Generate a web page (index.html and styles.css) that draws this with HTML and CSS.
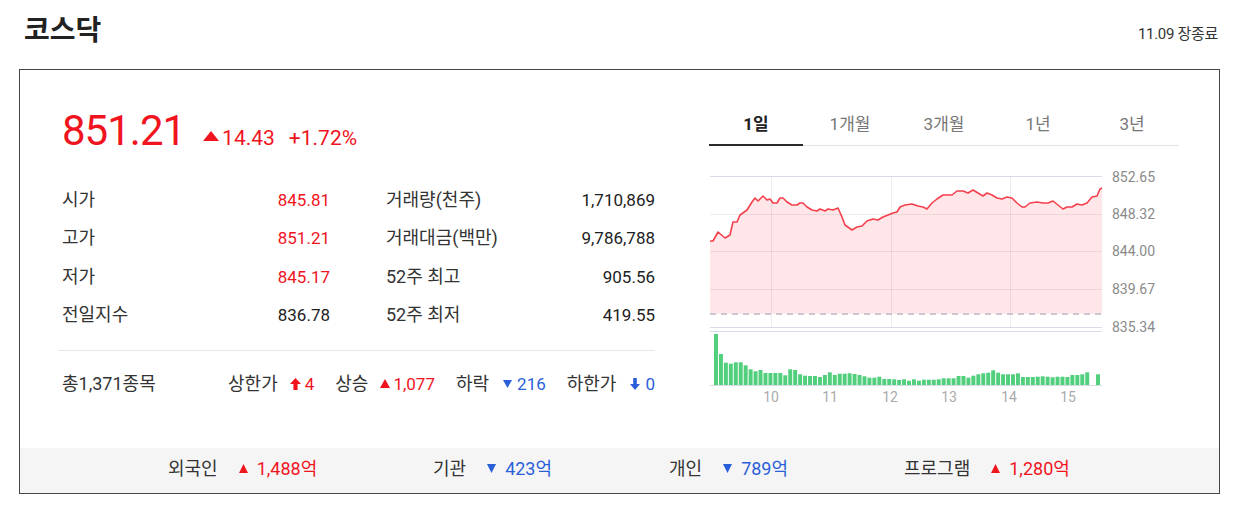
FILE: index.html
```html
<!DOCTYPE html>
<html lang="ko">
<head>
<meta charset="utf-8">
<title>코스닥</title>
<link rel="stylesheet" href="styles.css">
</head>
<body>
<div class="header">
  <h1 class="title">코스닥</h1>
  <div class="date">11.09 장종료</div>
</div>
<div class="box">
  <div class="main">
    <div class="left">
      <div class="price-row">
        <span class="price">851.21</span>
        <span class="chg"><svg class="tri-lg" width="16" height="10" viewBox="0 0 16 10"><path d="M8 0 L16 10 H0 Z" fill="#f0141e"/></svg>14.43</span>
        <span class="rate">+1.72%</span>
      </div>
      <div class="stats">
        <div class="col">
          <div class="row"><span class="lbl">시가</span><span class="up">845.81</span></div>
          <div class="row"><span class="lbl">고가</span><span class="up">851.21</span></div>
          <div class="row"><span class="lbl">저가</span><span class="up">845.17</span></div>
          <div class="row"><span class="lbl">전일지수</span><span class="val">836.78</span></div>
        </div>
        <div class="col">
          <div class="row"><span class="lbl">거래량(천주)</span><span class="val">1,710,869</span></div>
          <div class="row"><span class="lbl">거래대금(백만)</span><span class="val">9,786,788</span></div>
          <div class="row"><span class="lbl">52주 최고</span><span class="val">905.56</span></div>
          <div class="row"><span class="lbl">52주 최저</span><span class="val">419.55</span></div>
        </div>
      </div>
      <div class="divider"></div>
      <div class="summary">
        <span class="lbl">총1,371종목</span>
        <div class="counts">
          <span class="cnt"><span class="lbl">상한가</span><svg class="ic ic-arrow" width="11" height="12" viewBox="0 0 11 12"><path d="M5.5 0 L11 6 H7.6 V12 H3.4 V6 H0 Z" fill="#f0141e"/></svg><span class="up">4</span></span>
          <span class="cnt"><span class="lbl">상승</span><svg class="ic ic-tri" width="10" height="9" viewBox="0 0 10 9"><path d="M5 0 L10 9 H0 Z" fill="#f0141e"/></svg><span class="up">1,077</span></span>
          <span class="cnt"><span class="lbl">하락</span><svg class="ic ic-tri-d" width="9" height="8" viewBox="0 0 9 8"><path d="M0 0 H9 L4.5 8 Z" fill="#2b5fd9"/></svg><span class="down">216</span></span>
          <span class="cnt"><span class="lbl">하한가</span><svg class="ic ic-arrow-d" width="10" height="12" viewBox="0 0 10 12"><path d="M3.2 0 H6.8 V6 H10 L5 12 L0 6 H3.2 Z" fill="#2b5fd9"/></svg><span class="down">0</span></span>
        </div>
      </div>
    </div>
    <div class="right">
      <div class="tabs">
        <div class="tab active">1일</div>
        <div class="tab">1개월</div>
        <div class="tab">3개월</div>
        <div class="tab">1년</div>
        <div class="tab">3년</div>
      </div>
      <svg class="chart" width="472" height="264" viewBox="0 0 472 264">
        <g transform="translate(-709 -146)">
          <polygon fill="#ffe6e9" points="710,241 713,241 718,232 725,238 730,235 733,222 737,222 740,215 747,210 752,202 755,198 758,201 763,196 767,200 770,199 773,203 777,203 780,198 783,198 787,202 792,205 797,205 800,203 803,203 807,207 812,210 817,211 820,209 825,211 828,209 833,210 838,208 842,217 845,225 852,230 857,227 862,226 867,221 873,219 878,220 883,217 888,215 893,213 897,212 900,207 905,205 912,204 918,206 923,207 927,209 932,203 937,199 943,195 952,195 957,191 963,191 968,193 973,190 978,193 983,196 987,193 992,195 997,198 1002,199 1007,197 1012,198 1017,203 1022,207 1025,207 1030,203 1037,202 1043,203 1048,203 1053,201 1058,205 1063,209 1067,207 1072,207 1077,204 1082,205 1087,203 1092,197 1097,196 1100,189 1102,188 1102,314 710,314"/>
          <g stroke="rgba(0,0,0,0.07)" stroke-width="1">
            <line x1="710" y1="214.5" x2="1102" y2="214.5"/>
            <line x1="710" y1="251.5" x2="1102" y2="251.5"/>
            <line x1="710" y1="289.5" x2="1102" y2="289.5"/>
            <line x1="771.5" y1="176" x2="771.5" y2="327"/>
            <line x1="891.5" y1="176" x2="891.5" y2="327"/>
            <line x1="1010.5" y1="176" x2="1010.5" y2="327"/>
          </g>
          <g stroke="#d6dbe7" stroke-width="1">
            <line x1="710" y1="176.5" x2="1102" y2="176.5"/>
            <line x1="710" y1="327.5" x2="1102" y2="327.5"/>
            <line x1="710" y1="331.5" x2="1102" y2="331.5"/>
            <line x1="710" y1="385.5" x2="1102" y2="385.5"/>
          </g>
          <line x1="710" y1="314" x2="1102" y2="314" stroke="#cbc6d2" stroke-width="2" stroke-dasharray="6 5"/>
          <polyline fill="none" stroke="#f4404c" stroke-width="1.6" stroke-linejoin="round" points="710,241 713,241 718,232 725,238 730,235 733,222 737,222 740,215 747,210 752,202 755,198 758,201 763,196 767,200 770,199 773,203 777,203 780,198 783,198 787,202 792,205 797,205 800,203 803,203 807,207 812,210 817,211 820,209 825,211 828,209 833,210 838,208 842,217 845,225 852,230 857,227 862,226 867,221 873,219 878,220 883,217 888,215 893,213 897,212 900,207 905,205 912,204 918,206 923,207 927,209 932,203 937,199 943,195 952,195 957,191 963,191 968,193 973,190 978,193 983,196 987,193 992,195 997,198 1002,199 1007,197 1012,198 1017,203 1022,207 1025,207 1030,203 1037,202 1043,203 1048,203 1053,201 1058,205 1063,209 1067,207 1072,207 1077,204 1082,205 1087,203 1092,197 1097,196 1100,189 1102,188"/>
          <g fill="#8a8a8a" font-size="14" class="axis">
            <text x="1112" y="182">852.65</text>
            <text x="1112" y="219">848.32</text>
            <text x="1112" y="256">844.00</text>
            <text x="1112" y="294">839.67</text>
            <text x="1112" y="332">835.34</text>
          </g>
          <g fill="#aaaaaa" font-size="14" text-anchor="middle" class="axis">
            <text x="771" y="402">10</text>
            <text x="830" y="402">11</text>
            <text x="890" y="402">12</text>
            <text x="949" y="402">13</text>
            <text x="1009" y="402">14</text>
            <text x="1068" y="402">15</text>
          </g>
          <g fill="#52cf7c">
            <g transform="translate(714 0) scale(0.99 1)">
              <rect x="0" y="334" width="4" height="51"/>
              <rect x="5" y="354" width="4" height="31"/>
              <rect x="10" y="362.7" width="4" height="22.3"/>
              <rect x="15" y="363.7" width="4" height="21.3"/>
              <rect x="20" y="362.3" width="4" height="22.7"/>
              <rect x="25" y="362.3" width="4" height="22.7"/>
              <rect x="30" y="365.3" width="4" height="19.7"/>
              <rect x="35" y="369.3" width="4" height="15.7"/>
              <rect x="40" y="371.3" width="4" height="13.7"/>
              <rect x="45" y="370" width="4" height="15"/>
              <rect x="50" y="373" width="4" height="12"/>
              <rect x="55" y="373" width="4" height="12"/>
              <rect x="60" y="373" width="4" height="12"/>
              <rect x="65" y="373" width="4" height="12"/>
              <rect x="70" y="375.3" width="4" height="9.7"/>
              <rect x="75" y="369.3" width="4" height="15.7"/>
              <rect x="80" y="370" width="4" height="15"/>
              <rect x="85" y="374.3" width="4" height="10.7"/>
              <rect x="90" y="375.7" width="4" height="9.3"/>
              <rect x="95" y="376" width="4" height="9"/>
              <rect x="100" y="376" width="4" height="9"/>
              <rect x="105" y="377" width="4" height="8"/>
              <rect x="110" y="375" width="4" height="10"/>
              <rect x="115" y="372.3" width="4" height="12.7"/>
              <rect x="120" y="375" width="4" height="10"/>
              <rect x="125" y="373.7" width="4" height="11.3"/>
              <rect x="130" y="373.7" width="4" height="11.3"/>
              <rect x="135" y="373.3" width="4" height="11.7"/>
              <rect x="140" y="374" width="4" height="11"/>
              <rect x="145" y="375" width="4" height="10"/>
              <rect x="150" y="376.3" width="4" height="8.7"/>
              <rect x="155" y="377.7" width="4" height="7.3"/>
              <rect x="160" y="377.7" width="4" height="7.3"/>
              <rect x="165" y="376.7" width="4" height="8.3"/>
              <rect x="170" y="379" width="4" height="6"/>
              <rect x="175" y="379" width="4" height="6"/>
              <rect x="180" y="379.3" width="4" height="5.7"/>
              <rect x="185" y="380" width="4" height="5"/>
              <rect x="190" y="379.3" width="4" height="5.7"/>
              <rect x="195" y="380.7" width="4" height="4.3"/>
              <rect x="200" y="379.3" width="4" height="5.7"/>
              <rect x="205" y="380.7" width="4" height="4.3"/>
              <rect x="210" y="379.7" width="4" height="5.3"/>
              <rect x="215" y="379.7" width="4" height="5.3"/>
              <rect x="220" y="379.7" width="4" height="5.3"/>
              <rect x="225" y="379.3" width="4" height="5.7"/>
              <rect x="230" y="378.3" width="4" height="6.7"/>
              <rect x="235" y="378.3" width="4" height="6.7"/>
              <rect x="240" y="378.3" width="4" height="6.7"/>
              <rect x="245" y="376" width="4" height="9"/>
              <rect x="250" y="376" width="4" height="9"/>
              <rect x="255" y="377.7" width="4" height="7.3"/>
              <rect x="260" y="375.7" width="4" height="9.3"/>
              <rect x="265" y="374.3" width="4" height="10.7"/>
              <rect x="270" y="373.3" width="4" height="11.7"/>
              <rect x="275" y="372.7" width="4" height="12.3"/>
              <rect x="280" y="370.3" width="4" height="14.7"/>
              <rect x="285" y="372.7" width="4" height="12.3"/>
              <rect x="290" y="374.3" width="4" height="10.7"/>
              <rect x="295" y="374.3" width="4" height="10.7"/>
              <rect x="300" y="374.3" width="4" height="10.7"/>
              <rect x="305" y="373.3" width="4" height="11.7"/>
              <rect x="310" y="377" width="4" height="8"/>
              <rect x="315" y="377" width="4" height="8"/>
              <rect x="320" y="377" width="4" height="8"/>
              <rect x="325" y="376.7" width="4" height="8.3"/>
              <rect x="330" y="376.3" width="4" height="8.7"/>
              <rect x="335" y="376.7" width="4" height="8.3"/>
              <rect x="340" y="377.3" width="4" height="7.7"/>
              <rect x="345" y="376.7" width="4" height="8.3"/>
              <rect x="350" y="376.7" width="4" height="8.3"/>
              <rect x="355" y="377" width="4" height="8"/>
              <rect x="360" y="375" width="4" height="10"/>
              <rect x="365" y="375" width="4" height="10"/>
              <rect x="370" y="374.3" width="4" height="10.7"/>
              <rect x="375" y="372.3" width="4" height="12.7"/>
            </g>
            <rect x="1096" y="374.3" width="4" height="10.7"/>
          </g>
        </g>
      </svg>
    </div>
  </div>
  <div class="footer">
    <div class="fitem"><span class="lbl">외국인</span><svg class="fic" width="9" height="9" viewBox="0 0 9 9"><path d="M4.5 0 L9 9 H0 Z" fill="#f0141e"/></svg><span class="up">1,488억</span></div>
    <div class="fitem"><span class="lbl">기관</span><svg class="fic" width="9" height="9" viewBox="0 0 9 9"><path d="M0 0 H9 L4.5 9 Z" fill="#2b5fd9"/></svg><span class="down">423억</span></div>
    <div class="fitem"><span class="lbl">개인</span><svg class="fic" width="9" height="9" viewBox="0 0 9 9"><path d="M0 0 H9 L4.5 9 Z" fill="#2b5fd9"/></svg><span class="down">789억</span></div>
    <div class="fitem"><span class="lbl">프로그램</span><svg class="fic" width="9" height="9" viewBox="0 0 9 9"><path d="M4.5 0 L9 9 H0 Z" fill="#f0141e"/></svg><span class="up">1,280억</span></div>
  </div>
</div>
</body>
</html>
```

FILE: styles.css
```css
* {
  box-sizing: border-box;
  margin: 0;
  padding: 0;
}

body {
  margin: 0;
  width: 1243px;
  background: #ffffff;
  font-family: Roboto, "Noto Sans CJK KR", sans-serif;
  color: #333333;
}

.header {
  display: flex;
  justify-content: space-between;
  align-items: flex-start;
  height: 69px;
  padding: 0 25px 0 24px;
}

.title {
  font-size: 28px;
  font-weight: 700;
  line-height: 40px;
  padding-top: 11px;
  color: #222222;
}

.date {
  font-size: 15px;
  line-height: 20px;
  padding-top: 24px;
  color: #333333;
  letter-spacing: -0.3px;
}

.box {
  margin-left: 19px;
  width: 1201px;
  height: 425px;
  border: 1px solid #464646;
  display: flex;
  flex-direction: column;
}

.main {
  flex: 1;
  display: flex;
  gap: 54px;
  padding: 37px 38px 0 42px;
}

.left {
  width: 593px;
}

.up {
  color: #f0141e;
}

.down {
  color: #2b5fd9;
}

.lbl {
  color: #333333;
}

.val {
  color: #222222;
}

.price-row {
  display: flex;
  align-items: baseline;
  line-height: 48px;
  color: #f0141e;
}

.price {
  font-size: 42px;
  letter-spacing: -1px;
}

.chg {
  font-size: 21px;
  margin-left: 18px;
}

.tri-lg {
  vertical-align: 4px;
  margin-right: 3px;
}

.rate {
  font-size: 21px;
  margin-left: 14px;
}

.stats {
  display: grid;
  grid-template-columns: 268px 269px;
  column-gap: 56px;
  margin-top: 19px;
}

.col {
  display: flex;
  flex-direction: column;
}

.row {
  display: flex;
  justify-content: space-between;
  height: 38.4px;
  line-height: 38.4px;
  font-size: 17px;
}

.row .lbl,
.summary .lbl {
  font-size: 18px;
}

.divider {
  margin-top: 15px;
  margin-left: -4px;
  height: 1px;
  background: #e6e6e6;
}

.summary {
  display: flex;
  justify-content: space-between;
  margin-top: 16px;
  height: 34px;
  line-height: 34px;
  font-size: 17px;
}

.counts {
  display: flex;
  gap: 21px;
}

.cnt {
  display: flex;
  align-items: center;
}

.ic-arrow {
  margin: 0 4px 0 12px;
}

.ic-tri {
  margin: 0 3px 0 12px;
}

.ic-tri-d {
  margin: 0 5px 0 14px;
}

.ic-arrow-d {
  margin: 0 5px 0 14px;
}

.right {
  width: 472px;
}

.tabs {
  display: flex;
  width: 470px;
  border-bottom: 1px solid #e4e4e4;
}

.tab {
  flex: 1;
  text-align: center;
  font-size: 17px;
  line-height: 34px;
  padding-bottom: 3px;
  border-bottom: 2px solid transparent;
  margin-bottom: -1px;
  color: #777777;
}

.tab.active {
  border-bottom-color: #2a2a2a;
  color: #222222;
  font-weight: 700;
}

.chart {
  display: block;
}

.axis {
  font-family: Roboto, "Noto Sans CJK KR", sans-serif;
}

.footer {
  height: 45px;
  background: #f5f5f5;
  display: grid;
  grid-template-columns: 265px 236px 235px auto;
  align-items: center;
  padding: 0 0 4px 148px;
  font-size: 18px;
}

.fitem {
  display: flex;
  align-items: center;
  line-height: 30px;
}

.fic {
  margin: 0 9px 0 21px;
}
```
